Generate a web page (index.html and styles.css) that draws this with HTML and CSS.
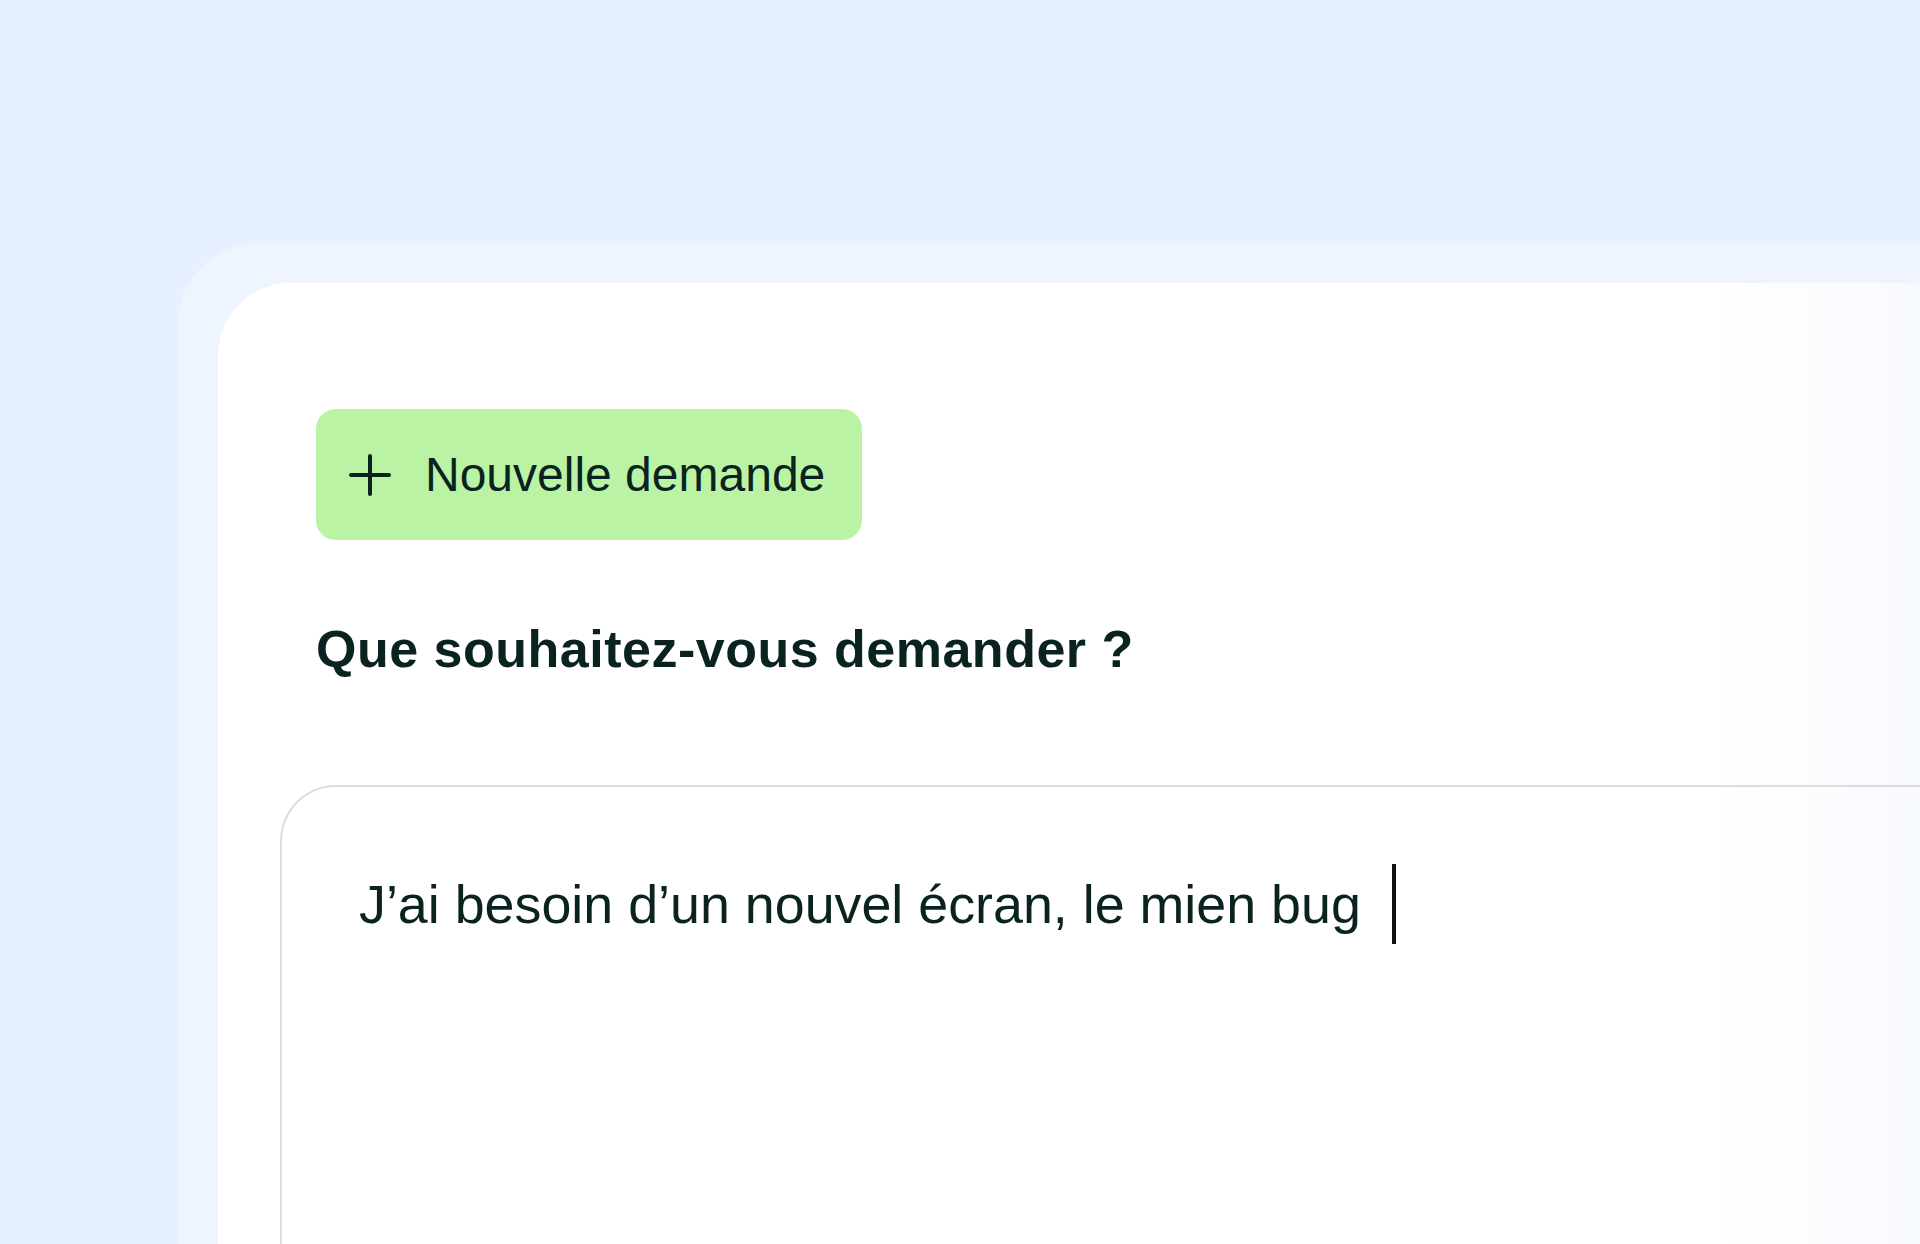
FILE: index.html
```html
<!DOCTYPE html>
<html lang="fr">
  <head>
    <meta charset="UTF-8" />
    <meta name="viewport" content="width=device-width, initial-scale=1.0" />
    <title>Nouvelle demande</title>
    <link rel="stylesheet" href="styles.css">
  </head>
  <body>
    <div class="frame">
      <div class="panel">
        <!-- bouton nouvelle demande -->
        <button class="new-request">
          <svg class="plus" width="42" height="42" viewBox="0 0 42 42">
            <path d="M21 2 V40 M2 21 H40" stroke="#0b2320" stroke-width="4" stroke-linecap="round" fill="none" />
          </svg>
          <span>Nouvelle demande</span>
        </button>

        <h2 class="question">Que souhaitez-vous demander ?</h2>

        <!-- zone de saisie -->
        <div class="input-box">
          <div class="input-line">
            <span class="input-text">J’ai besoin d’un nouvel écran, le mien bug</span>
            <span class="caret"></span>
          </div>
        </div>
      </div>
    </div>
  </body>
</html>
```

FILE: styles.css
```css
* {
  margin: 0;
  padding: 0;
  box-sizing: border-box;
}

html,
body {
  height: 1244px;
  overflow: hidden;
}

body {
  font-family: "Liberation Sans", Arial, sans-serif;
  background-color: #e6f0fe;
  color: #0b2320;
}

.frame {
  margin: 243px -200px 0 177px;
  padding: 40px 0 0 41px;
  background-color: #eef5fe;
  border-radius: 83px 0 0 0;
  min-height: 1100px;
}

.panel {
  background: linear-gradient(90deg, #ffffff 1500px, #f5f8fe 1760px);
  border-radius: 72px 0 0 0;
  min-height: 1060px;
  padding: 126px 0 0 98px;
}

.new-request {
  display: flex;
  align-items: center;
  height: 131px;
  width: 546px;
  padding: 0 0 0 33px;
  gap: 34px;
  border: none;
  border-radius: 20px;
  background-color: #bbf3a5;
  color: #0b2320;
  font-family: inherit;
  font-size: 48px;
  cursor: pointer;
}

.plus {
  flex-shrink: 0;
}

.question {
  margin-top: 79px;
  font-size: 52px;
  line-height: 60px;
  letter-spacing: 0.5px;
  font-weight: bold;
}

.input-box {
  margin: 106px 0 0 -36px;
  border: 2px solid #dcdcdc;
  border-right: none;
  border-bottom: none;
  border-radius: 56px 0 0 0;
  min-height: 600px;
  padding: 77px 0 0 77px;
}

.input-line {
  display: flex;
  align-items: center;
  height: 80px;
}

.input-text {
  font-size: 53.8px;
  line-height: 64px;
  white-space: nowrap;
}

.caret {
  width: 4px;
  height: 80px;
  margin-left: 31px;
  background-color: #111;
}
```
